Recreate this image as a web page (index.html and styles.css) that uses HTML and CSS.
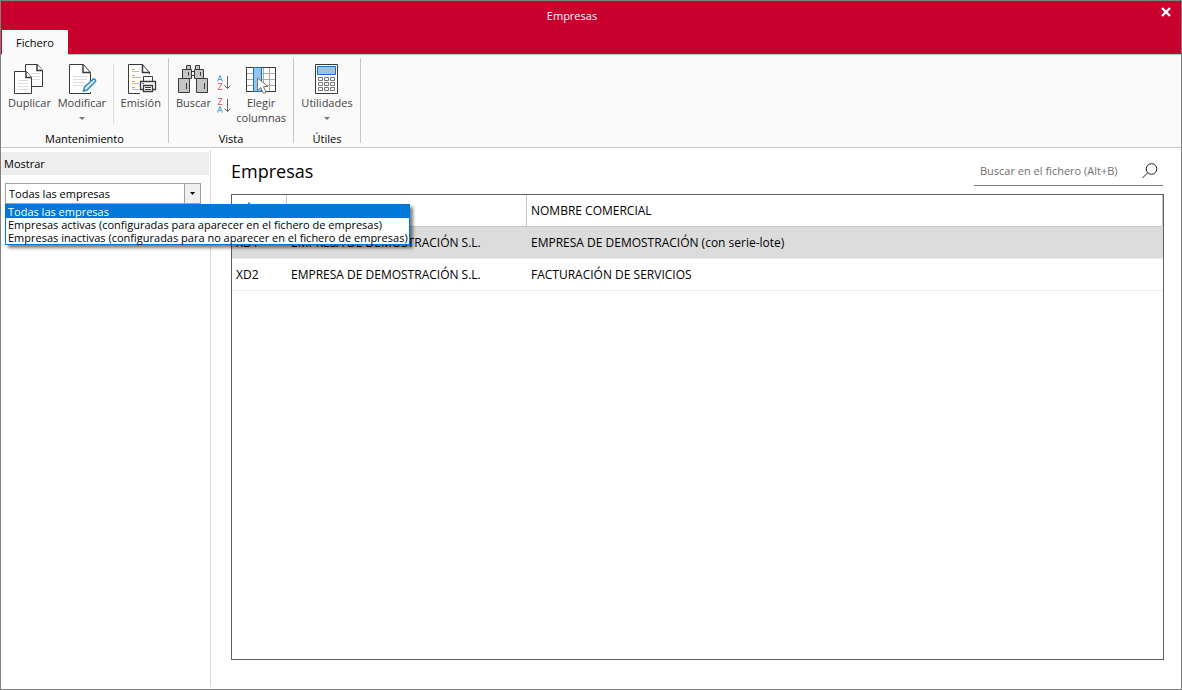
FILE: index.html
```html
<!DOCTYPE html>
<html lang="es">
<head>
<meta charset="utf-8">
<title>Empresas</title>
<link rel="stylesheet" href="styles.css">
</head>
<body>
<div class="window">
  <header class="titlebar">
    <h1 class="window-title">Empresas</h1>
    <button class="close" type="button" aria-label="Cerrar">
      <svg width="10" height="10" viewBox="0 0 10 10"><path d="M1 1L9 9M9 1L1 9" stroke="#fff" stroke-width="2.4"/></svg>
    </button>
    <div class="tabs" role="tablist"><button class="tab" type="button" role="tab" aria-selected="true">Fichero</button></div>
  </header>

  <div class="ribbon">
    <section class="group group-maintenance">
      <div class="tools">
        <button class="tool" type="button">
          <svg width="32" height="32" viewBox="0 0 32 32" fill="#fff" stroke="#3a3a38"><path d="M12.500 2.500H24.500L29.500 8.500V24.500H12.500Z"/><path d="M24 2.500V8.500H29.500" stroke-width="1.500"/><path d="M18 11.500H27M18 14.500H27M18 17.500H27" stroke="#ddd"/><path d="M1.500 9.500H13.500L18.500 15.500V31.500H1.500Z"/><path d="M13 9.500V15.500H18.500" stroke-width="1.500"/><path d="M5 18.500H15M5 21.500H15M5 24.500H15M5 27.500H15" stroke="#ddd"/></svg>
          <span>Duplicar</span>
        </button>
        <button class="tool" type="button">
          <svg width="32" height="32" viewBox="0 0 32 32" fill="none" stroke="#3a3a38"><path d="M24.500 30V31.500H3.500V2.500H17.500L24.500 10.500V20" fill="#fff"/><path d="M17 2.500V10.500H24.500" stroke-width="1.500"/><path d="M7 14.500H21M7 17.500H21M7 20.500H18M7 23.500H17" stroke="#ddd"/><path d="M17.500 29L18.500 25L27.500 17Q30 17 29.500 19.500L21 28Z" fill="#e5f2fb" stroke="#2a88cc" stroke-width="1.500"/></svg>
          <span>Modificar</span><i class="caret"></i>
        </button>
        <span class="divider"></span>
        <button class="tool" type="button">
          <svg width="32" height="32" viewBox="0 0 32 32" fill="none" stroke="#3a3a38"><path d="M15 31.500H3.500V2.500H17.500L24.500 10.500V12" fill="#fff"/><path d="M17.500 2.500V10.500H24.500" stroke-width="1.500"/><path d="M7 7.500H10M7 13.500H10M7 19.500H10M7 25.500H10" stroke="#e8a12c"/><path d="M7 9.500H14M7 15.500H16M7 21.500H14M7 27.500H14" stroke="#bbb"/><path d="M18.500 19V14.500H27.500V19" fill="#fff"/><path d="M15.500 19.500H30.500V27.500H15.500Z" fill="#fff" stroke-width="1.300"/><path d="M18.500 23.500H27.500V29.500H18.500Z" fill="#fff" stroke-width="1.300"/><path d="M20 25.500H26M20 27.500H26"/><path d="M17 21.500H19" stroke="#2a88cc"/></svg>
          <span>Emisión</span>
        </button>
      </div>
      <h2 class="group-label">Mantenimiento</h2>
    </section>

    <section class="group group-view">
      <div class="tools">
        <button class="tool" type="button">
          <svg width="32" height="32" viewBox="0 0 32 32" fill="#c6c4c2" stroke="#3a3a38"><path d="M9.500 3.500H13.500V7.500H9.500ZM18.500 3.500H22.500V7.500H18.500Z"/><path d="M13.500 9.500H18.500V13.500H13.500Z" fill="#fff"/><path d="M5.500 7.500H14.500V16.500H5.500ZM17.500 7.500H26.500V16.500H17.500ZM1.500 16.500H12.500V30.500H1.500ZM19.500 16.500H30.500V30.500H19.500Z"/><path d="M11.500 10V13.500M23.500 10V13.500M9.500 21V27M27.500 21V27"/></svg>
          <span>Buscar</span>
        </button>
        <div class="sorts">
          <button class="sort" type="button" aria-label="Orden ascendente">
            <svg width="16" height="18" viewBox="0 0 16 18" fill="none"><path d="M1.500 7.500L4 1.500L6.500 7.500M2.500 5.500H5.500" stroke="#4d9fd6"/><path d="M2 9.500H6L2 15.500H6.500" stroke="#e8656e"/><path d="M11.500 2V14.500M8.500 11.500L11.500 14.500L14.500 11.500" stroke="#666"/></svg>
          </button>
          <button class="sort" type="button" aria-label="Orden descendente">
            <svg width="16" height="18" viewBox="0 0 16 18" fill="none"><path d="M2 1.500H6L2 7.500H6.500" stroke="#e8656e"/><path d="M1.500 15.500L4 9.500L6.500 15.500M2.500 13.500H5.500" stroke="#4d9fd6"/><path d="M11.500 2V14.500M8.500 11.500L11.500 14.500L14.500 11.500" stroke="#666"/></svg>
          </button>
        </div>
        <button class="tool" type="button">
          <svg width="32" height="32" viewBox="0 0 32 32" fill="none" stroke="#3a3a38"><path d="M1.500 5.500H30.500V29.500H1.500Z" fill="#fff"/><path d="M2 11.500H30M2 17.500H30M2 23.500H30M18.500 6V29M24.500 6V29" stroke="#aaa"/><path d="M1.500 5.500H30.500V29.500H1.500Z"/><path d="M8.500 5.500H16.500V29.500H8.500Z" fill="#91c7ec" stroke="#1e6fb8"/><path d="M12.500 16V28.500L15.500 25.500L18.500 31.500L21 30.500L18.500 24.500H23Z" fill="#fff" stroke="#777"/></svg>
          <span>Elegir<br>columnas</span>
        </button>
      </div>
      <h2 class="group-label">Vista</h2>
    </section>

    <section class="group group-utils">
      <div class="tools">
        <button class="tool" type="button">
          <svg width="32" height="32" viewBox="0 0 32 32" fill="#fff" stroke="#3a3a38"><path d="M4.500 2.500H26.500V31.500H4.500Z"/><path d="M6.500 4.500H24.500V12.500H6.500Z" fill="#91c7ec" stroke="#1e6fb8"/><path d="M7.500 15.500H11.500V18.500H7.500ZM13.500 15.500H17.500V18.500H13.500ZM19.500 15.500H23.500V18.500H19.500ZM7.500 20.500H11.500V23.500H7.500ZM13.500 20.500H17.500V23.500H13.500ZM19.500 20.500H23.500V23.500H19.500ZM7.500 25.500H11.500V28.500H7.500ZM13.500 25.500H17.500V28.500H13.500ZM19.500 25.500H23.500V28.500H19.500Z" stroke="#777"/></svg>
          <span>Utilidades</span><i class="caret"></i>
        </button>
      </div>
      <h2 class="group-label">Útiles</h2>
    </section>
  </div>

  <div class="body">
    <aside class="sidebar">
      <label class="panel-title" for="mostrar">Mostrar</label>
      <div class="combo">
        <select class="combo-select" id="mostrar">
          <option>Todas las empresas</option>
          <option>Empresas activas (configuradas para aparecer en el fichero de empresas)</option>
          <option>Empresas inactivas (configuradas para no aparecer en el fichero de empresas)</option>
        </select>
        <span class="combo-arrow"><svg width="5" height="3" viewBox="0 0 5 3"><path d="M0 0H5L2.500 3Z"/></svg></span>
        <ul class="options" role="listbox" aria-label="Mostrar">
          <li class="option selected" role="option" aria-selected="true">Todas las empresas</li>
          <li class="option" role="option">Empresas activas (configuradas para aparecer en el fichero de empresas)</li>
          <li class="option" role="option">Empresas inactivas (configuradas para no aparecer en el fichero de empresas)</li>
        </ul>
      </div>
    </aside>

    <main class="content">
      <div class="content-head">
        <h2 class="content-title">Empresas</h2>
        <div class="search">
          <input class="search-input" type="text" aria-label="Buscar en el fichero" placeholder="Buscar en el fichero (Alt+B)">
          <button class="search-button" type="button" aria-label="Buscar">
            <svg width="16" height="16" viewBox="0 0 16 16" fill="none" stroke="#222"><circle cx="9.500" cy="6" r="5.300"/><path d="M5.500 10L0.500 15"/></svg>
          </button>
        </div>
      </div>
      <div class="grid">
        <table class="table">
          <colgroup><col class="col-code"><col class="col-name"><col></colgroup>
          <thead><tr><th>CÓDIGO</th><th></th><th>NOMBRE COMERCIAL</th></tr></thead>
          <tbody>
            <tr class="current"><td>XD1</td><td>EMPRESA DE DEMOSTRACIÓN S.L.</td><td>EMPRESA DE DEMOSTRACIÓN (con serie-lote)</td></tr>
            <tr><td>XD2</td><td>EMPRESA DE DEMOSTRACIÓN S.L.</td><td>FACTURACIÓN DE SERVICIOS</td></tr>
          </tbody>
        </table>
      </div>
    </main>
  </div>
</div>
</body>
</html>
```
FILE: styles.css
```css
* { box-sizing: border-box; }
body { margin: 0; font-family: "Open Sans", "Noto Sans", sans-serif; font-size: 11px; color: #000; }
button, input, select { font: inherit; color: inherit; background: none; border: 0; padding: 0; margin: 0; }
h1, h2, ul { margin: 0; padding: 0; font-size: inherit; font-weight: 400; list-style: none; }
svg { display: block; }

.window { display: flex; flex-direction: column; min-height: 100vh; border: 1px solid #808080; background: #fff; }

.titlebar { display: grid; grid-template-columns: 1fr auto 1fr; background: #c8002d; border-bottom: 1px solid #c0c0c0; }
.window-title { grid-column: 2; padding-right: 38px; line-height: 29px; color: #fff; }
.close { justify-self: end; align-self: start; padding: 6px 10px; }
.tabs { grid-column: 1 / -1; margin-bottom: -1px; padding-left: 1px; }
.tab { display: block; height: 25px; padding: 0 14px; background: #fafafa; }

.ribbon { display: flex; padding: 3px 0 4px; background: #fafafa; border-bottom: 1px solid #c6c6c6; }
.group { display: flex; flex-direction: column; justify-content: space-between; height: 85px; border-right: 1px solid #c6c6c6; }
.tools { display: flex; align-items: flex-start; padding: 4px 7px 0; }
.tool { display: flex; flex-direction: column; align-items: center; color: #444; line-height: 15px; }
.tool span { margin-top: 1px; }
.caret { margin-top: 7px; border: 3px solid transparent; border-top-color: #777; border-bottom: 0; }
.divider { width: 1px; height: 60px; margin-top: 2px; background: #dcdcdc; }
.group-label { line-height: 15px; margin-bottom: -3px; text-align: center; }
.group-maintenance { width: 168px; }
.group-maintenance .tools { justify-content: space-between; }
.group-view { width: 125px; }
.group-view .tools { justify-content: space-between; }
.group-utils { width: 67px; }
.group-utils .tools { justify-content: center; }
.sorts { display: flex; flex-direction: column; gap: 5px; padding-top: 12px; }

.body { display: flex; flex: 1; padding-top: 2px; padding-bottom: 2px; }
.sidebar { width: 210px; border-right: 1px solid #dcdcdc; }
.panel-title { display: block; margin: 2px 1px 8px 0; padding-left: 3px; line-height: 23px; background: #eee; }
.combo { position: relative; display: flex; margin: 0 9px 0 4px; height: 21px; border: 1px solid #a0a0a0; }
.combo-select { flex: 1; min-width: 0; padding-left: 3px; appearance: none; }
.combo-arrow { display: grid; place-items: center; width: 16px; border-left: 1px solid #a0a0a0; background: #f0f0f0; pointer-events: none; }
.options { position: absolute; z-index: 2; top: 20px; left: -1px; border: 1px solid #0078d7; background: #fff; box-shadow: 3px 3px 3px rgba(0, 0, 0, 0.5); white-space: nowrap; }
.option { padding: 0 1px 0 2px; line-height: 13px; }
.selected { background: #0078d7; color: #fff; }

.content { display: flex; flex: 1; flex-direction: column; padding: 6px 17px 27px 20px; }
.content-head { display: flex; justify-content: space-between; margin-bottom: 8px; }
.content-title { font-size: 18px; line-height: 30px; }
.search { display: flex; align-items: center; width: 189px; margin-right: 1px; height: 30px; border-bottom: 1px solid #808080; }
.search-input { flex: 1; min-width: 0; padding-left: 6px; }
.search-input::placeholder { color: #707070; opacity: 1; }
.search-button { margin-right: 5px; }

.grid { flex: 1; border: 1px solid #606060; }
.table { width: 100%; table-layout: fixed; border-collapse: separate; border-spacing: 0; font-size: 12px; }
.col-code { width: 55px; }
.col-name { width: 240px; }
.table th, .table td { height: 32px; padding: 0 4px; font-weight: 400; text-align: left; white-space: nowrap; border-bottom: 1px solid #ececec; }
.table th { border-bottom-color: #c6c6c6; border-right: 1px solid #c6c6c6; }
.current { background: #dcdcdc; }
```
